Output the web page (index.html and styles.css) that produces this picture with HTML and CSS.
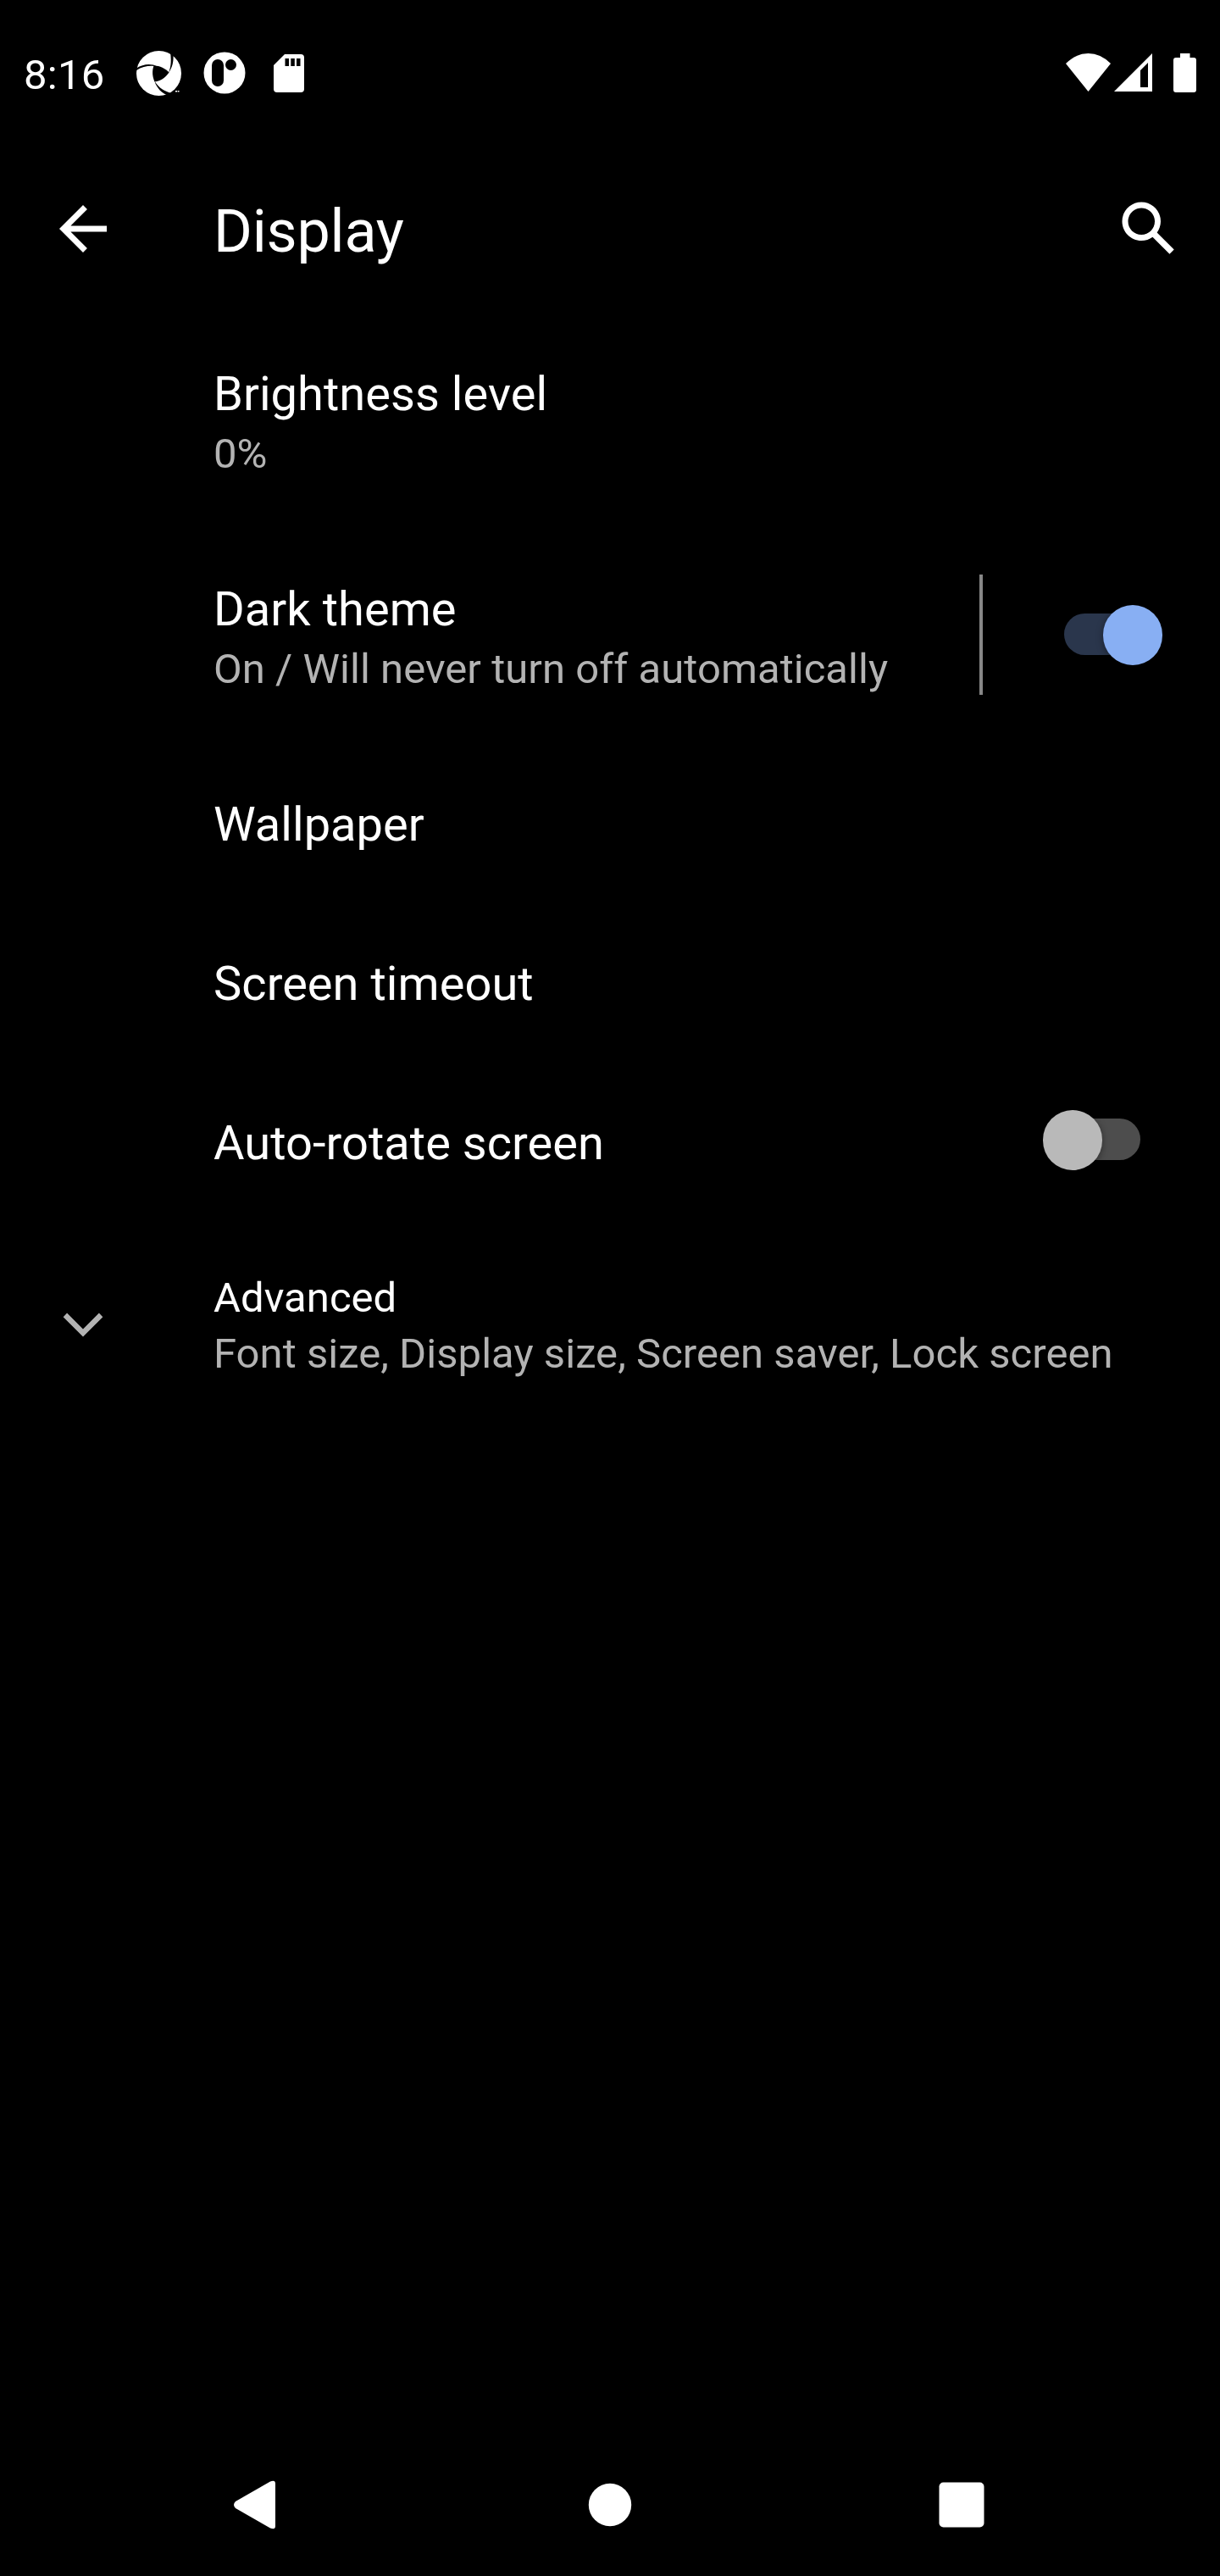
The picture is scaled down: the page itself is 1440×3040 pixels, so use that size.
FILE: index.html
```html
<!DOCTYPE html>
<html lang="en">
<head>
<meta charset="utf-8">
<title>Display</title>
<link rel="stylesheet" href="styles.css">
</head>
<body>
<div class="screen">
  <header class="status">
    <span class="clock">8:16</span>
    <svg class="ic-aperture" width="54" height="54" viewBox="0 0 54 54">
      <circle cx="26.500" cy="26.500" r="26.500" fill="#fff"/>
      <path d="M20.500 17.500C28 17.500 34 21 38.500 25.500C34 32 29 35.500 21.500 36.500C18.500 30 18.500 23 20.500 17.500Z"/>
      <path d="M0 20.500C8 15.500 17 14.500 25 18.500C16 17 8 18 0 23Z"/>
      <path d="M40 1C41 10 41.500 17 38 26C42.500 19 44 13 43.500 5L45 3Z"/>
      <path d="M21.500 36C24 44 30 50 38 53L42 50C33 48 27 44 21.500 36Z"/>
      <path d="M46 47h2v1.500h-2zM48.700 47h1.800v1.500h-1.800z" fill="#fff"/>
    </svg>
    <svg class="ic-round" width="50" height="50" viewBox="0 0 50 50">
      <circle cx="25" cy="25" r="24.500" fill="#fff"/>
      <rect x="10" y="9" width="14" height="32" rx="7"/>
      <circle cx="32.500" cy="15.500" r="6.500"/>
    </svg>
    <svg class="ic-sd" width="36" height="45" viewBox="0 0 36 45">
      <path d="M13 0H32Q36 0 36 4V41Q36 45 32 45H4Q0 45 0 41V13Z" fill="#fff"/>
      <path d="M13.500 5h4.500v9h-4.500zM20.300 5h4.500v9h-4.500zM27 5h4.500v9H27z"/>
    </svg>
    <span class="grow"></span>
    <svg class="ic-wifi" width="53" height="45" viewBox="0 0 53 45"><path d="M0 12Q12 0 26.500 0T53 12L26.500 45Z" fill="#fff"/></svg>
    <svg class="ic-cell" width="45" height="45" viewBox="0 0 45 45"><path fill-rule="evenodd" d="M45 0V45H0ZM40 11L31 20V40H40Z" fill="#fff"/></svg>
    <svg class="ic-batt" width="27" height="46" viewBox="0 0 27 46"><path d="M8 0H19.500V5H24Q27 5 27 8V43Q27 46 24 46H3Q0 46 0 43V8Q0 5 3 5H8Z" fill="#fff"/></svg>
  </header>
  <div class="toolbar">
    <svg class="ic-back" width="84" height="84" viewBox="0 0 24 24"><path fill="#fff" d="M20 11H7.830l5.590-5.590L12 4l-8 8 8 8 1.410-1.410L7.830 13H20v-2z"/></svg>
    <h1>Display</h1>
    <svg class="ic-search" width="84" height="84" viewBox="0 0 24 24"><path fill="#fff" d="M20.490 19l-5.730-5.730C15.530 12.200 16 10.910 16 9.500 16 5.910 13.090 3 9.500 3S3 5.910 3 9.500 5.910 16 9.500 16c1.410 0 2.700-.47 3.770-1.240L19 20.490 20.490 19zM5 9.500C5 7.010 7.010 5 9.500 5S14 7.010 14 9.500 11.990 14 9.500 14 5 11.990 5 9.500z"/></svg>
  </div>
  <main>
    <div class="row double"><div class="text"><div class="title">Brightness level</div><div class="summary">0%</div></div></div>
    <div class="row double"><div class="text"><div class="title">Dark theme</div><div class="summary">On / Will never turn off automatically</div></div><span class="divider"></span><span class="switch on"></span></div>
    <div class="row"><div class="title">Wallpaper</div></div>
    <div class="row"><div class="title">Screen timeout</div></div>
    <div class="row"><div class="title">Auto-rotate screen</div><span class="switch"></span></div>
    <div class="row advanced">
      <svg class="ic-expand" width="84" height="84" viewBox="0 0 24 24"><path fill="#b3b3b3" d="M6.600 7.570L12 12.970 17.400 7.570 18.670 8.900 12 15.600 5.330 8.900z"/></svg>
      <div class="text"><div class="title small">Advanced</div><div class="summary">Font size, Display size, Screen saver, Lock screen</div></div>
    </div>
  </main>
  <nav>
    <svg width="52" height="58" viewBox="0 0 52 58"><path d="M2 25L43 1.500Q49 -1 49 4V54Q49 59 43 56.500L2 33Q-2 29 2 25Z" fill="#fff"/></svg>
    <svg class="home" width="52" height="52" viewBox="0 0 52 52"><circle cx="26" cy="26" r="25.200" fill="#fff"/></svg>
    <svg width="54" height="54" viewBox="0 0 54 54"><rect x=".5" y=".5" width="53" height="53" rx="5" fill="#fff"/></svg>
  </nav>
</div>
</body>
</html>
```
FILE: styles.css
```css
body {
  margin: 0;
  background: #000;
  color: #fff;
  font-family: Roboto, sans-serif;
}
svg { display: block; flex: none; }
.screen { width: 1440px; height: 3040px; display: flex; flex-direction: column; overflow: hidden; }
.status { height: 172px; display: flex; align-items: flex-start; }
.clock { margin: 60px 0 0 28px; width: 132px; font-size: 49px; line-height: 58px; letter-spacing: 0.3px; white-space: nowrap; }
.grow { flex: 1; }
.ic-aperture { margin: 60px 0 0 1px; }
.ic-round { margin: 61px 0 0 25px; }
.ic-sd { margin: 64px 0 0 33px; }
.ic-wifi { margin-top: 63px; }
.ic-cell { margin: 63px 0 0 4px; }
.ic-batt { margin: 63px 28px 0 25px; }
.toolbar { height: 196px; display: flex; align-items: center; }
.ic-back { margin-left: 56px; }
h1 { margin: 6px 0 0 112px; flex: 1; font-size: 70px; font-weight: 400; line-height: 82px; letter-spacing: -0.2px; }
.ic-search { margin-right: 42px; }
main { flex: 1; padding-top: 3px; }
.row { height: 188px; display: flex; align-items: center; padding-left: 252px; padding-right: 68px; }
.row.double { height: 254px; }
.text { flex: 1; padding-top: 1px; }
.title { flex: 1; font-size: 56px; line-height: 74px; letter-spacing: 0.04px; white-space: nowrap; }
.summary { font-size: 49px; line-height: 67px; letter-spacing: 0.04px; color: #b3b3b3; white-space: nowrap; }
.divider { width: 4px; height: 142px; background: #878787; margin-bottom: 6px; }
.switch { position: relative; width: 92px; height: 49px; border-radius: 25px; background: #4d4d4d; margin: 0 26px 9px 0; }
.switch::after { content: ""; position: absolute; left: -23.5px; top: -9.7px; width: 70.4px; height: 70.4px; border-radius: 50%; background: #b9b9b9; box-shadow: 0 2px 8px rgba(0,0,0,.4); }
.switch.on { background: #2a364c; margin: 0 24px 7px 96px; }
.switch.on::after { left: 45.6px; background: #88aff3; }
.row.advanced { height: 243px; padding-left: 56px; }
.advanced .text { margin-left: 112px; }
.title.small { font-size: 49px; line-height: 65px; }
nav { height: 168px; display: flex; justify-content: space-between; align-items: center; padding: 0 278px 0 276px; }
.home { margin-left: 4px; }
```
